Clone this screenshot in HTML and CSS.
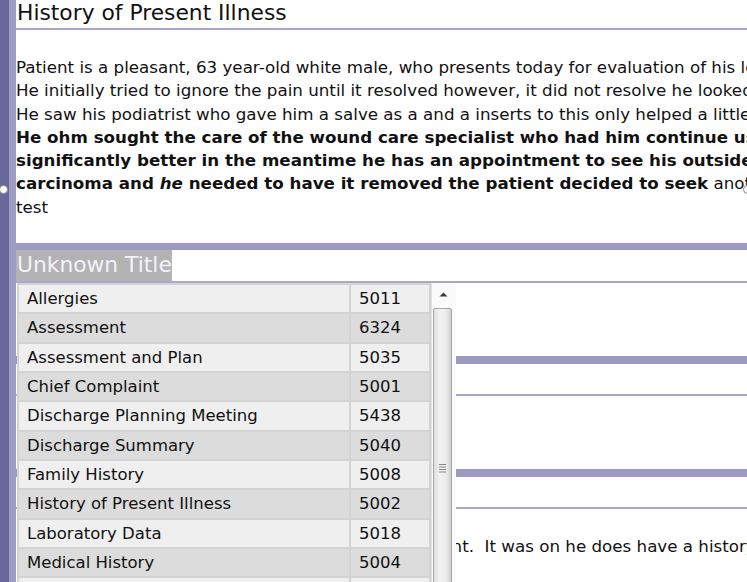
FILE: index.html
```html
<!DOCTYPE html>
<html>
<head>
<meta charset="utf-8">
<link rel="stylesheet" href="styles.css">
</head>
<body>
<div class="page">
  <div class="gutter"></div>
  <div class="doc">
    <section class="sec first">
      <h1 class="sec-head">History of Present Illness</h1>
      <div class="rule"></div>
      <div class="sec-body body-first">
        <p>Patient is a pleasant, 63 year-old white male, who presents today for evaluation of his left foot pain.</p>
        <p>He initially tried to ignore the pain until it resolved however, it did not resolve he looked for help.</p>
        <p>He saw his podiatrist who gave him a salve as a and a inserts to this only helped a little bit.</p>
        <p class="strong">He ohm sought the care of the wound care specialist who had him continue using the salve.</p>
        <p class="strong">significantly better in the meantime he has an appointment to see his outside dermatologist</p>
        <p><b>carcinoma and <i>he</i> needed to have it removed the patient decided to seek</b> another opinion.</p>
        <p>test</p>
      </div>
    </section>
    <div class="band"></div>
    <section class="sec">
      <h2 class="sec-head"><span class="title-selected">Unknown Title</span></h2>
      <div class="rule"></div>
      <div class="sec-body"><p>&nbsp;</p></div>
    </section>
    <div class="band"></div>
    <section class="sec">
      <h2 class="sec-head">Assessment</h2>
      <div class="rule"></div>
      <div class="sec-body"><p>&nbsp;</p></div>
    </section>
    <div class="band"></div>
    <section class="sec">
      <h2 class="sec-head">Plan</h2>
      <div class="rule"></div>
      <div class="sec-body"><p>Follow up with the wound care clinic for the treatment.&nbsp; It was on he does have a history of diabetes mellitus.</p></div>
    </section>
  </div>

  <span class="handle handle-left"></span>
  <span class="handle handle-right"></span>

  <div class="popup">
    <div class="list">
      <div class="cell odd">Allergies</div><div class="cell odd">5011</div>
      <div class="cell even">Assessment</div><div class="cell even">6324</div>
      <div class="cell odd">Assessment and Plan</div><div class="cell odd">5035</div>
      <div class="cell even">Chief Complaint</div><div class="cell even">5001</div>
      <div class="cell odd">Discharge Planning Meeting</div><div class="cell odd">5438</div>
      <div class="cell even">Discharge Summary</div><div class="cell even">5040</div>
      <div class="cell odd">Family History</div><div class="cell odd">5008</div>
      <div class="cell even">History of Present Illness</div><div class="cell even">5002</div>
      <div class="cell odd">Laboratory Data</div><div class="cell odd">5018</div>
      <div class="cell even">Medical History</div><div class="cell even">5004</div>
      <div class="cell odd">Medications</div><div class="cell odd">5010</div>
    </div>
    <div class="scrollbar">
      <div class="arrow-up">
        <svg width="9" height="5" viewBox="0 0 9 5"><path d="M0.5 4.5 L4.5 0.5 L8.5 4.5 Z" fill="#3a3a3a"/></svg>
      </div>
      <div class="thumb">
        <svg class="grip" width="9" height="10" viewBox="0 0 9 10"><path d="M1 1.5H8M1 4H8M1 6.5H8M1 9H8" stroke="#8a8a8a" stroke-width="1"/></svg>
      </div>
    </div>
  </div>
</div>
</body>
</html>
```

FILE: styles.css
```css
html, body {
  margin: 0;
  padding: 0;
  height: 100%;
  overflow: hidden;
  background: #ffffff;
}

.page {
  position: relative;
  display: flex;
  height: 582px;
  overflow: hidden;
  font-family: "DejaVu Sans", "Liberation Sans", sans-serif;
  color: #111111;
}

.gutter {
  flex: 0 0 16px;
  background: linear-gradient(to right, #6a689b 0, #6a689b 9px, #9e9cc2 9px, #9e9cc2 16px);
}

.doc {
  flex: 1;
  min-width: 0;
  overflow: hidden;
  white-space: nowrap;
}

.sec-head {
  margin: 0;
  height: 30.4px;
  font-size: 21.8px;
  font-weight: normal;
  line-height: 30px;
  color: #111111;
  padding-left: 1px;
}

.first .sec-head {
  height: 27.7px;
  line-height: 26px;
}

.title-selected {
  display: inline-block;
  height: 30.4px;
  background: #b3b3b3;
  color: #f2f2f8;
  padding-right: 0;
  margin-left: -1px;
  padding-left: 1px;
}

.rule {
  height: 2px;
  background: #a9a7cb;
}

.band {
  height: 7.4px;
  background: #9c9ac0;
}

.sec-body {
  padding: 26px 0 24px;
  font-size: 16.7px;
  line-height: 23.3px;
}

.body-first {
  padding: 26.3px 0 24px;
}

.sec-body p {
  margin: 0;
}

.strong {
  font-weight: bold;
}

.handle {
  position: absolute;
  top: 185px;
  width: 7px;
  height: 7px;
  border: 1px solid #8c8c8c;
  border-radius: 50%;
  background: #ffffff;
}

.handle-left {
  left: -1px;
}

.handle-right {
  left: 743px;
}

.popup {
  position: absolute;
  left: 17px;
  top: 283px;
  display: flex;
  align-items: flex-start;
}

.list {
  display: grid;
  grid-template-columns: 330px 78px;
  grid-auto-rows: 27.33px;
  gap: 2px;
  padding: 2px;
  background: #d3d3d3;
  font-size: 16.5px;
  line-height: 27.33px;
  color: #111111;
}

.cell {
  padding-left: 8px;
  white-space: nowrap;
}

.odd {
  background: #efefef;
}

.even {
  background: #dcdcdc;
}

.scrollbar {
  width: 24px;
  height: 320px;
  background: #fbfbfb;
  border-left: 1px solid #e2e2e2;
}

.arrow-up {
  height: 25px;
  display: flex;
  align-items: center;
  justify-content: center;
  padding-right: 1px;
}

.arrow-up svg {
  display: block;
  margin-top: -2px;
}

.thumb {
  margin-left: 1px;
  width: 19px;
  height: 290px;
  border: 1px solid #a6a6a6;
  border-radius: 2px;
  background: linear-gradient(to right, #dedede 0, #f3f3f3 35%, #ebebeb 70%, #d2d2d2 100%);
  display: flex;
  justify-content: center;
  padding-top: 154px;
  box-sizing: border-box;
}

.grip {
  display: block;
}
```
